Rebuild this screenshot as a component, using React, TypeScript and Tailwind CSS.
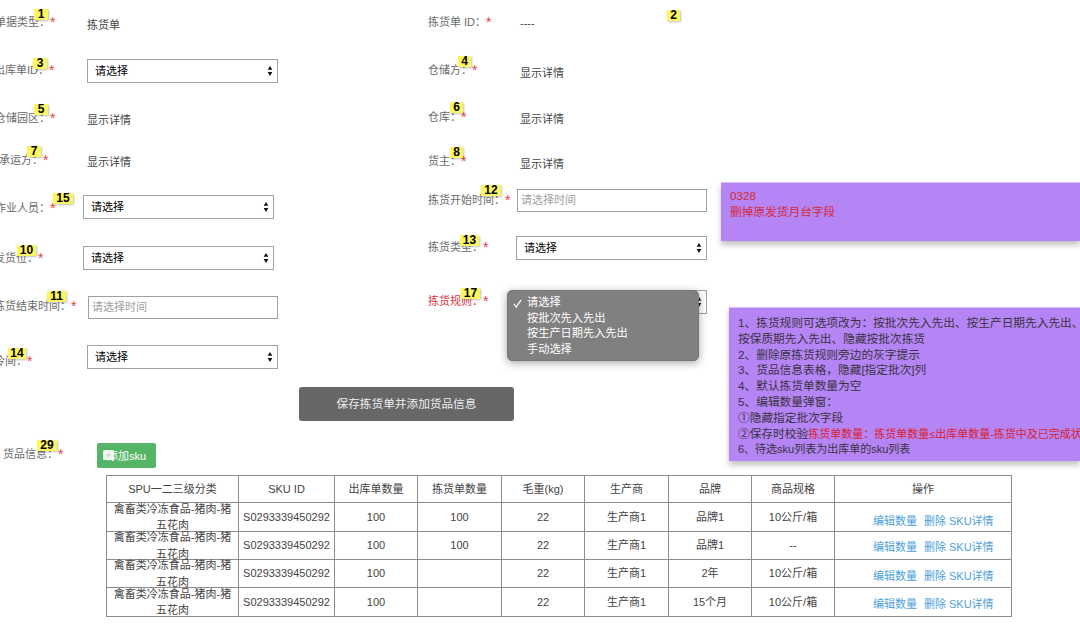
import type { ReactNode } from "react";

function Badge({ n, className }: { n: number; className: string }) {
  return (
    <span
      className={`absolute h-[11px] bg-[#fdf75f] text-center text-[12px] leading-[11px] font-bold text-black shadow-[1px_1px_2px_rgba(0,0,0,0.25)] ${className}`}
    >
      {n}
    </span>
  );
}

function Star() {
  return <span className="h-[16px] w-[6px] shrink-0 text-[14px] leading-[16px] text-[#e8403f]">*</span>;
}

function Field({
  label,
  n,
  badge,
  labelClass,
  className,
  red,
  children,
}: {
  label: string;
  n: number;
  badge: string;
  labelClass: string;
  className: string;
  red?: boolean;
  children: ReactNode;
}) {
  return (
    <div className={`relative flex h-[24px] items-center ${className}`}>
      <div className={`flex shrink-0 whitespace-nowrap ${labelClass}`}>
        <span className={red ? "text-[#d8343a]" : "text-[#6b6b6b]"}>{label}</span>
        <Star />
      </div>
      {children}
      <Badge n={n} className={badge} />
    </div>
  );
}

function Select({ className }: { className: string }) {
  return (
    <div className={`relative h-[24px] ${className}`}>
      <select
        defaultValue=""
        className="h-full w-full appearance-none border border-[#a3a3a3] bg-white pl-[7px] text-[11px] text-black outline-none"
      >
        <option value="">请选择</option>
      </select>
      <svg viewBox="0 0 6 11" className="pointer-events-none absolute top-[7px] right-[5px] h-[10px] w-[6px]">
        <path d="M3 0 L5.6 4 H0.4 Z M3 11 L5.6 6.5 H0.4 Z" fill="#111" />
      </svg>
    </div>
  );
}

function TimeInput({ className }: { className: string }) {
  return (
    <input
      placeholder="请选择时间"
      className={`h-[23px] border border-[#a0a0a0] bg-white pl-[3px] text-[11px] outline-none placeholder:text-[#a0a0a0] ${className}`}
    />
  );
}

function Value({ text }: { text: string }) {
  return <span className="text-[#444]">{text}</span>;
}

const rows = [
  { pick: "100", maker: "品牌1", spec: "10公斤/箱", op: "pt-[9px]" },
  { pick: "100", maker: "品牌1", spec: "--", op: "pt-[4px]" },
  { pick: "", maker: "2年", spec: "10公斤/箱", op: "pt-[6px]" },
  { pick: "", maker: "15个月", spec: "10公斤/箱", op: "pt-[4px]" },
];

const rowHeights = ["h-[29px]", "h-[28px]", "h-[28px]", "h-[29px]"];

const headers = ["SPU一二三级分类", "SKU ID", "出库单数量", "拣货单数量", "毛重(kg)", "生产商", "品牌", "商品规格", "操作"];

const cell = "border border-[#8c8c8c] p-0 text-center align-middle";

export default function App() {
  return (
    <div className="relative h-[633px] w-[1080px] overflow-hidden bg-white font-['Liberation_Sans','Noto_Sans_CJK_SC',sans-serif] text-[11px] leading-[16px] text-[#444]">
      <div className="flex h-[369px]">
        <div className="w-[428px] shrink-0">
          <Field label="单据类型：" n={1} badge="left-[34px] top-[-4px] w-[14px]" labelClass="w-[56px] mr-[31px] mb-[6px] justify-end" className="mt-[13px]">
            <Value text="拣货单" />
          </Field>
          <Field label="出库单ID：" n={3} badge="left-[33px] top-[-1px] w-[14px]" labelClass="w-[55px] mr-[32px] mb-[2px] justify-end" className="mt-[22px]">
            <Select className="w-[191px]" />
          </Field>
          <Field label="仓储园区：" n={5} badge="left-[34px] top-[-4px] w-[14px]" labelClass="w-[56px] mr-[31px] mb-[4px] justify-end" className="mt-[25px]">
            <Value text="显示详情" />
          </Field>
          <Field label="承运方：" n={7} badge="left-[27px] top-[-4px] w-[14px]" labelClass="w-[49px] mr-[38px] mb-[4px] justify-end" className="mt-[18px]">
            <Value text="显示详情" />
          </Field>
          <Field label="作业人员：" n={15} badge="left-[53px] top-[-2px] w-[20px]" labelClass="w-[56px] mr-[27px] mt-[2px] justify-end" className="mt-[21px]">
            <Select className="w-[191px]" />
          </Field>
          <Field label="发货位：" n={10} badge="left-[17px] top-[-1px] w-[19px]" labelClass="w-[44px] mr-[39px] justify-end" className="mt-[27px]">
            <Select className="w-[191px]" />
          </Field>
          <Field label="拣货结束时间：" n={11} badge="left-[47px] top-[-4px] w-[19px]" labelClass="w-[77px] mr-[11px] mb-[3px] justify-end" className="mt-[25px]">
            <TimeInput className="w-[190px]" />
          </Field>
          <Field label="冷间：" n={14} badge="left-[8px] top-[3px] w-[18px]" labelClass="w-[33px] mr-[54px] mt-[8px] justify-end" className="mt-[26px]">
            <Select className="w-[191px]" />
          </Field>
        </div>

        <div className="w-[293px] shrink-0">
          <Field label="拣货单 ID：" n={2} badge="left-[239px] top-[-1px] w-[13px]" labelClass="w-[92px] mb-[2px]" className="mt-[11px]">
            <Value text="----" />
          </Field>
          <Field label="仓储方：" n={4} badge="left-[30px] top-[-5px] w-[13px]" labelClass="w-[92px] mb-[6px]" className="mt-[26px]">
            <Value text="显示详情" />
          </Field>
          <Field label="仓库：" n={6} badge="left-[22px] top-[-5px] w-[13px]" labelClass="w-[92px] mb-[4px]" className="mt-[22px]">
            <Value text="显示详情" />
          </Field>
          <Field label="货主：" n={8} badge="left-[22px] top-[-5px] w-[13px]" labelClass="w-[92px] mb-[6px]" className="mt-[21px]">
            <Value text="显示详情" />
          </Field>
          <Field label="拣货开始时间：" n={12} badge="left-[53px] top-[-3px] w-[20px]" labelClass="w-[89px]" className="mt-[12px]">
            <TimeInput className="w-[190px]" />
          </Field>
          <Field label="拣货类型：" n={13} badge="left-[32px] top-[-1px] w-[19px]" labelClass="w-[88px] mb-[2px]" className="mt-[24px]">
            <Select className="w-[191px]" />
          </Field>
          <Field label="拣货规则：" n={17} badge="left-[33px] top-[-2px] w-[19px]" labelClass="w-[88px] mb-[2px]" className="mt-[30px]" red>
            <Select className="w-[191px]" />
            <div className="absolute top-0 left-[79px] h-[71px] w-[192px] rounded-[5px] border border-[#777] bg-[#808080] py-[4px] pl-[19px] text-[11.2px] leading-[15.7px] text-white shadow-[0_2px_8px_rgba(0,0,0,0.35)]">
              <svg viewBox="0 0 10 10" className="absolute top-[8px] left-[5px] h-[9px] w-[9px]">
                <path d="M1 5.5 L3.6 9 L9 1" fill="none" stroke="#fff" strokeWidth="1.3" />
              </svg>
              <div>请选择</div>
              <div>按批次先入先出</div>
              <div>按生产日期先入先出</div>
              <div>手动选择</div>
            </div>
          </Field>
        </div>

        <div className="w-[359px] shrink-0 whitespace-nowrap text-[11.7px] leading-[15.8px]">
          <div className="mt-[182px] h-[59px] border-t border-[#d9c0fb] bg-[#b584f5] pt-[5px] pl-[9px] text-[#d62b3a] shadow-[0_4px_6px_rgba(0,0,0,0.25)]">
            <div>0328</div>
            <div>删掉原发货月台字段</div>
          </div>
          <div className="mt-[66px] ml-[8px] h-[154px] overflow-hidden border-t border-[#d9c0fb] bg-[#b584f5] pt-[7px] pl-[9px] text-[#3a3340] shadow-[0_4px_6px_rgba(0,0,0,0.25)]">
            <div>1、拣货规则可选项改为：按批次先入先出、按生产日期先入先出、</div>
            <div>按保质期先入先出、隐藏按批次拣货</div>
            <div>2、删除原拣货规则旁边的灰字提示</div>
            <div>3、货品信息表格，隐藏[指定批次]列</div>
            <div>4、默认拣货单数量为空</div>
            <div>5、编辑数量弹窗：</div>
            <div>①隐藏指定批次字段</div>
            <div>
              ②保存时校验<span className="text-[11px] text-[#d9232e]">拣货单数量：拣货单数量≤出库单数量-拣货中及已完成状</span>
            </div>
            <div className="text-[11px]">6、待选sku列表为出库单的sku列表</div>
          </div>
        </div>
      </div>

      <button className="mt-[18px] ml-[299px] flex h-[34px] w-[215px] items-center justify-center rounded-[3px] bg-[#676767] text-[11.67px] text-[#eee]">
        保存拣货单并添加货品信息
      </button>

      <div className="relative mt-[22px] flex h-[25px] items-center">
        <div className="mb-[3px] ml-[3px] flex w-[94px] text-[#6b6b6b]">
          货品信息：<Star />
        </div>
        <button className="relative h-[25px] w-[59px] rounded-[2px] bg-[#55b567] text-[11px] text-white">
          添加sku
          <svg viewBox="0 0 12 11" className="absolute top-[7px] left-[6px] h-[11px] w-[12px]">
            <rect width="11" height="10" rx="1.5" fill="#eef7f0" />
            <path d="M3 5 H8 M5.5 2.5 V7.5" stroke="#b9e2c3" strokeWidth="1" />
          </svg>
        </button>
        <Badge n={29} className="top-[-3px] left-[37px] w-[20px]" />
      </div>

      <table className="mt-[7px] ml-[106px] w-[905px] table-fixed border-collapse text-[11px] leading-[16.5px] text-[#444]">
        <colgroup>
          <col className="w-[132px]" />
          <col className="w-[96px]" />
          <col className="w-[83px]" />
          <col className="w-[84px]" />
          <col className="w-[83px]" />
          <col className="w-[84px]" />
          <col className="w-[83px]" />
          <col className="w-[83px]" />
          <col className="w-[177px]" />
        </colgroup>
        <thead>
          <tr className="h-[27px]">
            {headers.map((h) => (
              <th key={h} className={`${cell} font-normal`}>
                {h}
              </th>
            ))}
          </tr>
        </thead>
        <tbody>
          {rows.map((r, i) => (
            <tr key={i} className={rowHeights[i]}>
              <td className={cell}>
                <div className="flex h-[27px] items-center justify-center">
                  <div className="shrink-0">
                    禽畜类冷冻食品-猪肉-猪
                    <br />
                    五花肉
                  </div>
                </div>
              </td>
              <td className={cell}>S0293339450292</td>
              <td className={cell}>100</td>
              <td className={cell}>{r.pick}</td>
              <td className={cell}>22</td>
              <td className={cell}>生产商1</td>
              <td className={cell}>{r.maker}</td>
              <td className={cell}>{r.spec}</td>
              <td className={`${cell} text-left`}>
                <div className={`flex pl-[38px] text-[#4c9fdc] ${r.op}`}>
                  <span className="mr-[7px]">编辑数量</span>
                  <span className="mr-[3px]">删除</span>
                  <span>SKU详情</span>
                </div>
              </td>
            </tr>
          ))}
        </tbody>
      </table>
    </div>
  );
}
